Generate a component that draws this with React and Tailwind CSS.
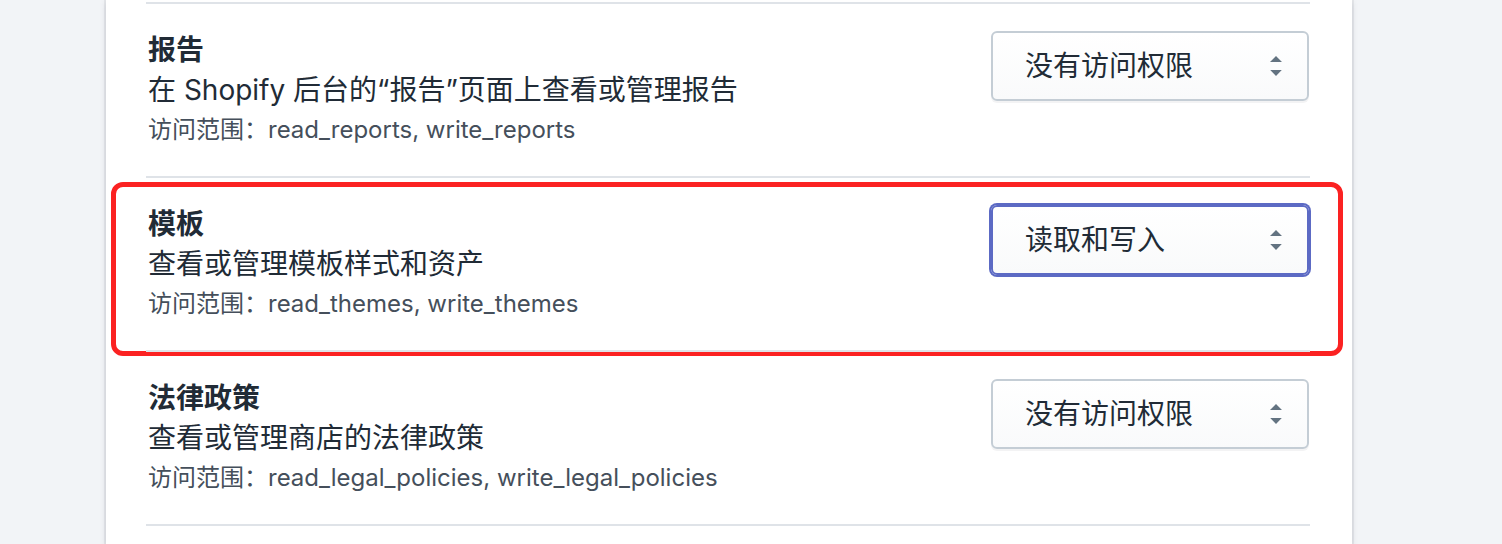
const SCOPES = [
  {
    title: "报告",
    desc: "在 Shopify 后台的“报告”页面上查看或管理报告",
    scope: "read_reports, write_reports",
    value: "没有访问权限",
  },
  {
    title: "模板",
    desc: "查看或管理模板样式和资产",
    scope: "read_themes, write_themes",
    value: "读取和写入",
    focused: true,
  },
  {
    title: "法律政策",
    desc: "查看或管理商店的法律政策",
    scope: "read_legal_policies, write_legal_policies",
    value: "没有访问权限",
  },
];

function ArrowUpDown() {
  return (
    <svg viewBox="0 0 20 20" className="h-10 w-10 shrink-0 fill-[#637381]" aria-hidden="true">
      <path d="M13 8l-3-3-3 3h6zm-.1 4L10 15l-2.9-3h5.8z" />
    </svg>
  );
}

function AccessSelect({ value, focused }) {
  return (
    <div
      className={
        "mt-px mr-px flex h-[70px] w-[318px] items-center justify-between rounded-[6px] border-2 bg-gradient-to-b from-white to-[#f9fafb] pl-[32px] pr-[11px] " +
        (focused
          ? "border-[#5c6ac4] shadow-[0_0_0_2px_#5c6ac4]"
          : "border-[#c4cdd5] shadow-[0_2px_0_0_rgba(22,29,37,0.05)]")
      }
    >
      <span className="text-[28px] leading-10 text-[#212b36]">{value}</span>
      <ArrowUpDown />
    </div>
  );
}

function ScopeRow({ item }) {
  return (
    <div className="relative border-t-2 border-[#dfe3e8]">
      <div className="flex items-start justify-between pt-[26px] pb-[26px]">
        <div className="pl-[2px]">
          <p className="text-[28px] font-semibold leading-10 text-[#212b36]">{item.title}</p>
          <p className="text-[28px] leading-10 text-[#212b36]">{item.desc}</p>
          <p className="text-[24px] leading-10 text-[#454f5b]">访问范围：{item.scope}</p>
        </div>
        <AccessSelect value={item.value} focused={item.focused} />
      </div>
      {item.focused && (
        <div className="pointer-events-none absolute top-[4px] -right-[33px] -bottom-[6px] -left-[35px] rounded-[12px] border-[5px] border-[#fb2222]" />
      )}
    </div>
  );
}

export default function App() {
  return (
    <div className="h-[544px] overflow-hidden bg-[#f2f4f7] font-[Inter,'Noto_Sans_CJK_SC',sans-serif]">
      <div className="ml-[106px] h-full w-[1246px] bg-white pt-[2px] pl-10 pr-[42px] shadow-[0_0_0_2px_rgba(63,63,68,0.07),0_2px_6px_0_rgba(63,63,68,0.15)]">
        {SCOPES.map((item) => (
          <ScopeRow key={item.title} item={item} />
        ))}
        <div className="border-t-2 border-[#dfe3e8]" />
      </div>
    </div>
  );
}
